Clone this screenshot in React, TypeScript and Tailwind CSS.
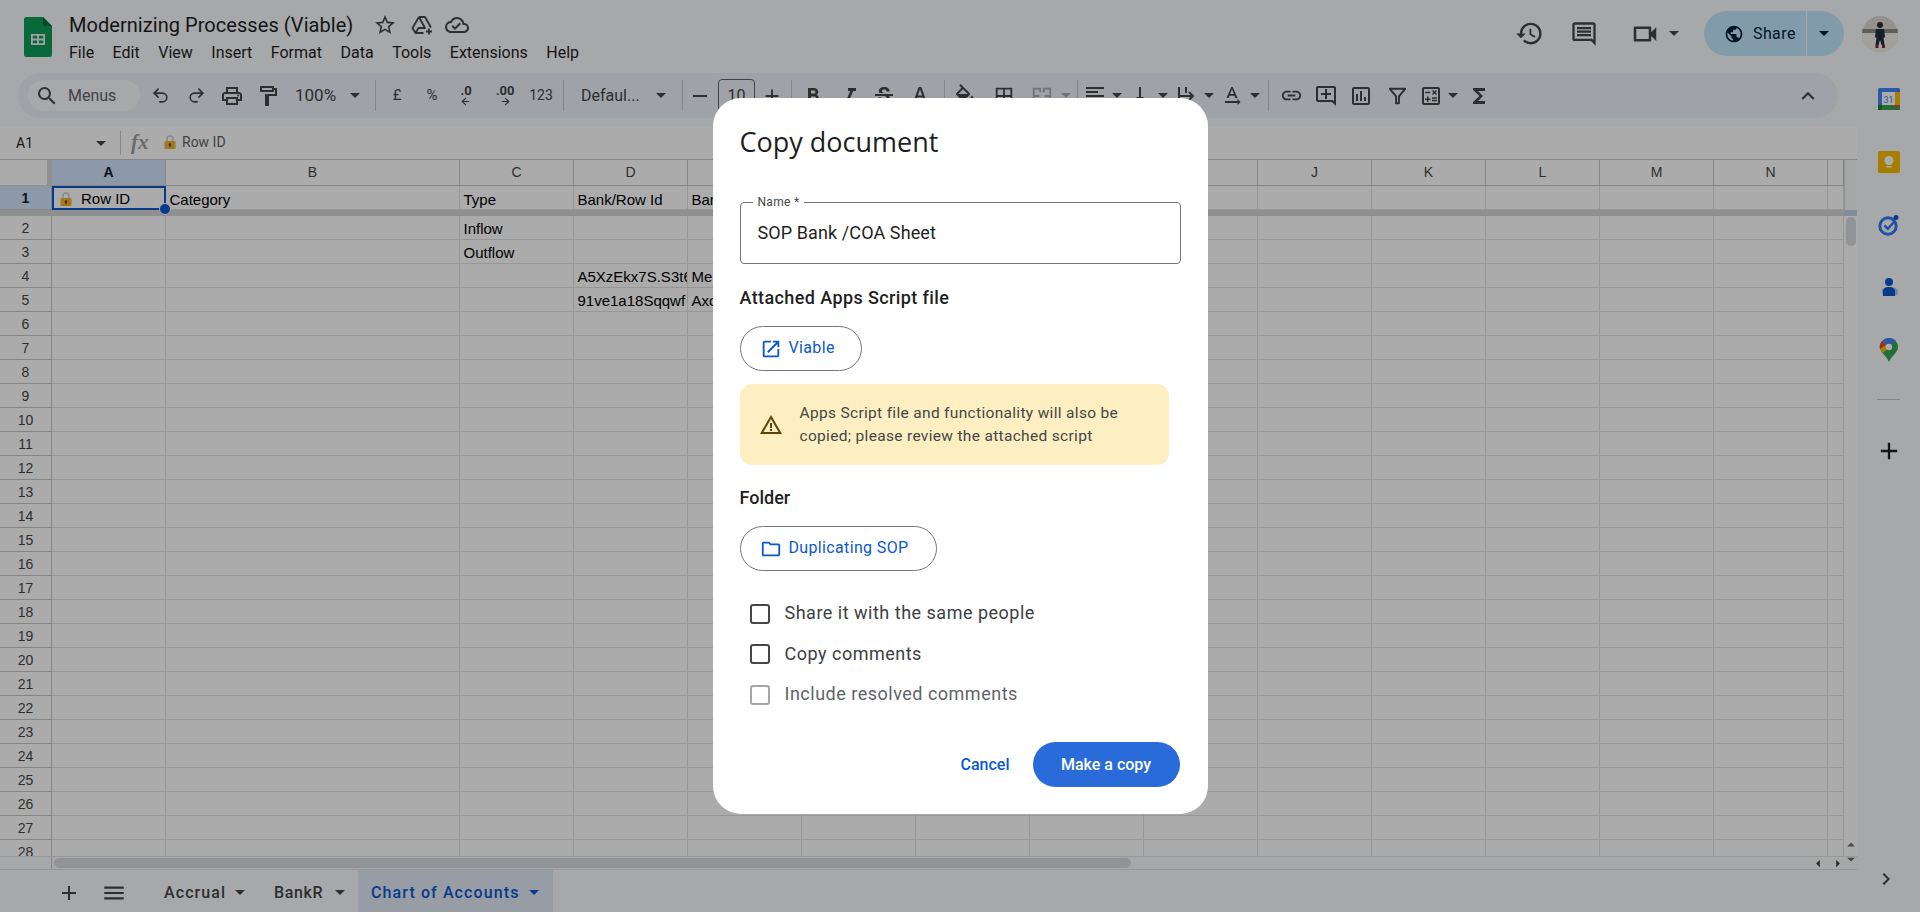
import React from 'react'
import {
  MdAdd, MdChevronRight, MdExpandLess,
  MdFormatAlignLeft, MdFormatBold, MdFormatItalic, MdFunctions, MdHistory,
  MdLink, MdMenu, MdOpenInNew, MdOutlineAddComment, MdOutlineBorderAll, MdOutlineCalculate, MdOutlineCloudDone, MdOutlineComment,
  MdOutlineFolder, MdOutlineFormatColorFill, MdOutlineFormatPaint, MdOutlineInsertChart, MdOutlinePrint, MdOutlineStarBorder, MdOutlineVideocam,
  MdPublic, MdSearch, MdStrikethroughS, MdTextRotationNone, MdFormatColorText, MdVerticalAlignBottom, MdWarningAmber,
} from 'react-icons/md'
import { ArrowLeft, ArrowRight, Redo2, Undo2 } from 'lucide-react'

const gridCols = 'grid grid-cols-[52px_114px_294px_114px_114px_114px_114px_114px_114px_114px_114px_114px_114px_114px_114px_16px] grid-rows-[24px]'
const colNames = ['A', 'B', 'C', 'D', 'E', 'F', 'G', 'H', 'I', 'J', 'K', 'L', 'M', 'N', '']

const cells: Record<number, Record<number, string>> = {
  2: { 2: 'Inflow' },
  3: { 2: 'Outflow' },
  4: { 3: 'A5XzEkx7S.S3t6', 4: 'Me' },
  5: { 3: '91ve1a18Sqqwf', 4: 'Axc' },
}

const menus = ['File', 'Edit', 'View', 'Insert', 'Format', 'Data', 'Tools', 'Extensions', 'Help']

const Lock = ({ className }: any) => (
  <svg viewBox="0 0 12 14" className={className}>
    <path d="M3 6V4a3 3 0 0 1 6 0v2" fill="none" stroke="#c9cdd2" strokeWidth="1.6" />
    <rect x="0.5" y="6" width="11" height="8" rx="1" fill="#f0b429" />
    <circle cx="6" cy="9.6" r="1.3" fill="#5b4208" />
    <rect x="5.4" y="9.8" width="1.2" height="2.4" fill="#5b4208" />
  </svg>
)

const Caret = ({ className = '' }: any) => (
  <span className={`inline-block w-0 h-0 border-x-[5px] border-x-transparent border-t-[5px] border-t-[#444746] ${className}`} />
)

const Sep = ({ className = '' }: any) => <div className={`w-px h-[31px] bg-[#c7c7c7] shrink-0 ${className}`} />

const Tb = ({ children, className = 'w-[36px]' }: any) => (
  <div className={`flex items-center justify-center shrink-0 h-full text-[#444746] ${className}`}>{children}</div>
)

const Header = () => (
  <div className="h-[73px] flex items-start shrink-0">
    <svg viewBox="0 0 28 40" className="w-[28px] h-[40px] ml-[24px] mt-[17px] shrink-0">
      <path d="M2.5 0H19l9 9v28.5a2.5 2.5 0 0 1-2.500 2.500h-23A2.500 2.500 0 0 1 0 37.500v-35A2.500 2.500 0 0 1 2.500 0z" fill="#0f9d58" />
      <path d="M19 0l9 9h-6.500A2.500 2.500 0 0 1 19 6.500z" fill="#0a6e3d" />
      <path d="M7 17h14v11H7z M8.800 18.800v2.800h4.300v-2.800z M14.900 18.800v2.800h4.300v-2.800z M8.800 23.400v2.800h4.300v-2.800z M14.900 23.400v2.800h4.300v-2.800z" fill="#f1f1f1" fillRule="evenodd" />
    </svg>
    <div className="ml-[17px] mt-[10px]">
      <div className="flex items-center h-[30px]">
        <span className="font-['Roboto',sans-serif] text-[20px] text-[#1f1f1f] tracking-[0.05px] w-[304px] whitespace-nowrap">Modernizing Processes (Viable)</span>
        <MdOutlineStarBorder className="text-[24px] text-[#444746]" />
        <svg viewBox="0 0 24 24" className="w-[24px] h-[24px] ml-[13px]" fill="none" stroke="#444746" strokeWidth="1.800" strokeLinejoin="round">
          <path d="M9 4h6l6 10.500M9 4L2.500 15l3 5h8M9 4l6 11H8.500l-3 5" />
          <path d="M19 15.500v6M16 18.500h6" />
        </svg>
        <MdOutlineCloudDone className="text-[24px] text-[#444746] ml-[11px]" />
      </div>
      <div className="flex items-center h-[24px] mt-[1px] font-['Roboto',sans-serif] text-[16px] text-[#1f1f1f] gap-[18.5px]">
        {menus.map(m => <span key={m}>{m}</span>)}
      </div>
    </div>
    <div className="ml-auto flex items-center h-[45px] mt-[11px] text-[#444746]">
      <MdHistory className="text-[29px]" />
      <MdOutlineComment className="text-[28px] ml-[26px]" />
      <MdOutlineVideocam className="text-[30px] ml-[32px]" />
      <Caret className="ml-[9px]" />
      <div className="ml-[25px] w-[140px] h-[45px] rounded-full bg-[#c2e7ff] flex items-center font-['Roboto',sans-serif] text-[#001d35]">
        <MdPublic className="text-[20px] ml-[20px]" />
        <span className="text-[16px] ml-[9px] tracking-[0.4px]">Share</span>
        <div className="w-px h-full bg-[#f9fbfd] ml-[10px]" />
        <Caret className="ml-[12px] !border-t-[#001d35]" />
      </div>
      <svg viewBox="0 0 36 36" className="w-[36px] h-[36px] rounded-full ml-[18px] mr-[22px]">
        <rect width="36" height="36" fill="#dcdad5" />
        <path d="M0 13h36v4H0z" fill="#8d8c85" />
        <rect y="17" width="36" height="19" fill="#f0efeb" />
        <circle cx="18" cy="9" r="3" fill="#2e2a28" />
        <path d="M14 13h8l1 8-1.500 1 1 7h-3l-1.500-5-1.500 5h-3l1-7-1.500-1z" fill="#1f2f3d" />
        <path d="M13.500 29h3v3h-3z M20 29h3v3h-3z" fill="#7a2c28" />
      </svg>
    </div>
  </div>
)

const Toolbar = () => (
  <div className="h-[45px] w-[1820px] ml-[18px] rounded-full bg-[#edf2fa] flex items-center font-['Roboto',sans-serif] text-[15px] text-[#444746] shrink-0">
    <div className="ml-[10px] w-[112px] h-[31px] rounded-full bg-[#f9fbfd] flex items-center shrink-0">
      <MdSearch className="text-[24px] ml-[7px]" />
      <span className="ml-[9px] text-[16px] text-[#5f6368]">Menus</span>
    </div>
    <Tb className="w-[36px] ml-[2px]"><Undo2 size={19} strokeWidth={2} /></Tb>
    <Tb><Redo2 size={19} strokeWidth={2} /></Tb>
    <Tb><MdOutlinePrint className="text-[24px]" /></Tb>
    <Tb><MdOutlineFormatPaint className="text-[24px]" /></Tb>
    <Tb className="w-[89px] justify-start pl-[9px]">
      <span className="text-[17px]">100%</span><Caret className="ml-[14px]" />
    </Tb>
    <Sep />
    <Tb className="w-[42px]"><span className="text-[15px]">£</span></Tb>
    <Tb className="w-[28px]"><span className="text-[15px]">%</span></Tb>
    <Tb className="w-[40px]">
      <span className="flex flex-col items-center text-[13px] font-bold leading-[11px]">.0<ArrowLeft size={11} strokeWidth={2.5} /></span>
    </Tb>
    <Tb className="w-[38px]">
      <span className="flex flex-col items-center text-[13px] font-bold leading-[11px]">.00<ArrowRight size={11} strokeWidth={2.5} /></span>
    </Tb>
    <Tb className="w-[34px]"><span className="text-[14px]">123</span></Tb>
    <Sep className="ml-[5px]" />
    <Tb className="w-[118px] justify-start pl-[17px]">
      <span className="text-[16px] w-[75px]">Defaul...</span><Caret />
    </Tb>
    <Sep />
    <Tb className="w-[34px]"><span className="w-[14px] h-[2px] bg-[#444746]" /></Tb>
    <Tb className="w-[37px] ml-[1px]">
      <div className="w-[37px] h-[33px] border border-[#5f6368] rounded-[4px] flex items-center justify-center text-[16px]">10</div>
    </Tb>
    <Tb className="w-[34px]"><MdAdd className="text-[22px]" /></Tb>
    <Sep className="ml-[2px]" />
    <Tb className="w-[42px]"><MdFormatBold className="text-[24px]" /></Tb>
    <Tb className="w-[32px]"><MdFormatItalic className="text-[24px]" /></Tb>
    <Tb className="w-[36px]"><MdStrikethroughS className="text-[24px]" /></Tb>
    <Tb className="w-[36px]"><MdFormatColorText className="text-[24px]" /></Tb>
    <Sep className="ml-[6px]" />
    <Tb className="w-[40px]"><MdOutlineFormatColorFill className="text-[24px]" /></Tb>
    <Tb className="w-[38px]"><MdOutlineBorderAll className="text-[22px]" /></Tb>
    <Tb className="w-[38px] opacity-40">
      <svg viewBox="0 0 24 24" className="w-[22px] h-[22px]" fill="none" stroke="#444746" strokeWidth="2">
        <path d="M10 8V4H3v16h7v-4 M14 8V4h7v16h-7v-4 M4 12h5 M20 12h-5" />
      </svg>
    </Tb>
    <Tb className="w-[10px] opacity-40"><Caret /></Tb>
    <Sep className="ml-[6px]" />
    <Tb className="w-[34px]"><MdFormatAlignLeft className="text-[24px]" /></Tb>
    <Tb className="w-[10px]"><Caret /></Tb>
    <Tb className="w-[36px]"><MdVerticalAlignBottom className="text-[24px]" /></Tb>
    <Tb className="w-[10px]"><Caret /></Tb>
    <Tb className="w-[36px]">
      <svg viewBox="0 0 24 24" className="w-[24px] h-[24px]" fill="none" stroke="#444746" strokeWidth="2">
        <path d="M5 3v18 M12 3v6 M12 15v6 M5 12h14 M15 8l4 4-4 4" />
      </svg>
    </Tb>
    <Tb className="w-[10px]"><Caret /></Tb>
    <Tb className="w-[36px]"><MdTextRotationNone className="text-[24px]" /></Tb>
    <Tb className="w-[10px]"><Caret /></Tb>
    <Sep className="ml-[8px]" />
    <Tb className="w-[44px]"><MdLink className="text-[23px]" /></Tb>
    <Tb className="w-[26px]"><MdOutlineAddComment className="text-[24px]" /></Tb>
    <Tb className="w-[44px]"><MdOutlineInsertChart className="text-[24px]" /></Tb>
    <Tb className="w-[28px]">
      <svg viewBox="0 0 24 24" className="w-[23px] h-[23px]" fill="none" stroke="#444746" strokeWidth="2" strokeLinejoin="round">
        <path d="M4 5h16l-6.500 8v7h-3v-7z" />
      </svg>
    </Tb>
    <Tb className="w-[34px] ml-[3px]"><MdOutlineCalculate className="text-[24px]" /></Tb>
    <Tb className="w-[10px]"><Caret /></Tb>
    <Tb className="w-[42px]"><MdFunctions className="text-[24px]" /></Tb>
    <Tb className="ml-auto w-[36px] mr-[12px]"><MdExpandLess className="text-[26px]" /></Tb>
  </div>
)

const FormulaBar = () => (
  <div className="h-[33px] mt-[9px] bg-white border-b border-[#c7c7c7] flex items-center font-['Roboto',sans-serif] text-[#444746] shrink-0">
    <span className="ml-[16px] w-[80px] text-[14px] text-[#1f1f1f]">A1</span>
    <Caret />
    <div className="w-px h-[24px] bg-[#c7c7c7] ml-[14px]" />
    <span className="ml-[10px] w-[33px] font-['Liberation_Serif',serif] italic font-bold text-[21px] text-[#9aa0a6]">fx</span>
    <Lock className="w-[12px] h-[14px] -mt-[2px]" />
    <span className="ml-[6px] -mt-[2px] text-[14px] text-[#5f6368]">Row ID</span>
  </div>
)

const cellBase = 'border-r border-b overflow-hidden whitespace-nowrap'

const Grid = () => {
  const rows = Array.from({ length: 27 }, (_, i) => i + 2)
  return (
    <div className="relative h-[696px] w-[1844px] overflow-hidden bg-white font-['Liberation_Sans',sans-serif] text-[15px] text-black">
      <div className={`${gridCols} !grid-rows-[26px] h-[26px] text-[14px] text-[#444746]`}>
        <div className="border-b border-r-[5px] border-[#d6d6d6]" />
        {colNames.map((c, i) => (
          <div key={i} className={`${cellBase} border-[#c7c7c7] flex items-center justify-center ${i === 0 ? 'bg-[#d3e3fd] font-bold text-[#0b1a33]' : ''}`}>{c}</div>
        ))}
      </div>
      <div className={`${gridCols} h-[24px] leading-[27px]`}>
        <div className={`${cellBase} border-[#c7c7c7] bg-[#d3e3fd] font-bold text-[14px] leading-[24px] text-[#0b1a33] text-center`}>1</div>
        <div className="relative border-2 border-[#0b57d0] flex items-center pl-[6px] pt-[2px] leading-[18px]">
          <Lock className="w-[12px] h-[14px] shrink-0" />
          <span className="ml-[9px]">Row ID</span>
          <span className="absolute -right-[7px] -bottom-[7px] w-[12px] h-[12px] rounded-full bg-[#0b57d0] border border-white" />
        </div>
        {['Category', 'Type', 'Bank/Row Id', 'Ban'].map(t => <div key={t} className={`${cellBase} border-[#e1e1e1] px-[3.500px]`}>{t}</div>)}
        {colNames.slice(5).map((_, i) => <div key={i} className={`${cellBase} border-[#e1e1e1]`} />)}
      </div>
      <div className="h-[6px] bg-[#d6d6d6]" />
      {rows.map(r => (
        <div key={r} className={`${gridCols} h-[24px] leading-[25px]`}>
          <div className={`${cellBase} border-[#c7c7c7] text-[14px] leading-[24px] text-[#444746] text-center`}>{r}</div>
          {colNames.map((_, i) => (
            <div key={i} className={`${cellBase} border-[#e1e1e1] px-[3.500px]`}>{cells[r]?.[i] ?? ''}</div>
          ))}
        </div>
      ))}
    </div>
  )
}

const VScroll = () => (
  <div className="w-[13px] h-[696px] bg-white flex flex-col items-center relative">
    <div className="h-[50px] w-full bg-[#f8f9fa] border-l border-[#d6d6d6]" />
    <div className="h-[6px] w-full bg-[#c2d0ec]" />
    <div className="w-[10px] h-[29px] rounded-full bg-[#dadce0] mt-[1px]" />
    <div className="absolute -bottom-[6px] z-10 flex flex-col gap-[10px]">
      <Caret className="rotate-180 scale-75" />
      <Caret className="scale-75" />
    </div>
  </div>
)

const HScroll = () => (
  <div className="h-[14px] w-[1857px] bg-[#f9fbfd] border-y border-[#e1e1e1] flex items-center relative">
    <div className="w-[52px] h-full border-r border-[#c7c7c7]" />
    <div className="ml-[2px] w-[1077px] h-[10px] rounded-full bg-[#dadce0]" />
    <Caret className="absolute left-[1813px] rotate-90 scale-75" />
    <Caret className="absolute left-[1833px] -rotate-90 scale-75" />
  </div>
)

const Tabs = () => (
  <div className="h-[42px] pt-[3px] bg-[#f9fbfd] flex items-center font-['Roboto',sans-serif] text-[16px] tracking-[1.1px] font-medium text-[#444746]">
    <MdAdd className="text-[24px] ml-[57px] text-[#444746]" />
    <MdMenu className="text-[26px] ml-[20px] text-[#444746]" />
    <span className="ml-[37px] w-[70px] whitespace-nowrap">Accrual</span>
    <Caret className="ml-[1px]" />
    <span className="ml-[29px] w-[58px] tracking-[0.6px]">BankR</span>
    <Caret className="ml-[3px]" />
    <div className="ml-[13px] -mt-[3px] h-[42px] pt-[3px] w-[195px] bg-[#e1e9f7] flex items-center pl-[13px] text-[#0b57d0]">
      <span className="w-[158px] whitespace-nowrap">Chart of Accounts</span>
      <Caret className="!border-t-[#0b57d0]" />
    </div>
  </div>
)

const SideBar = () => (
  <div className="w-[63px] flex flex-col items-center relative">
    <svg viewBox="0 0 22 22" className="w-[22px] h-[22px] mt-[15px]">
      <rect width="22" height="22" rx="1.500" fill="#4285f4" />
      <rect x="4" y="4" width="14" height="14" fill="#fff" />
      <rect x="17" y="4" width="5" height="14" fill="#fbbc04" />
      <rect x="4" y="17" width="18" height="5" fill="#34a853" />
      <rect y="17" x="0" width="4" height="5" fill="#188038" />
      <path d="M17 22l5-5h-5z" fill="#ea4335" />
      <text x="10.500" y="14.500" textAnchor="middle" fontSize="9" fontFamily="Roboto, sans-serif" fill="#4285f4">31</text>
    </svg>
    <svg viewBox="0 0 22 22" className="w-[22px] h-[22px] mt-[41px]">
      <rect width="22" height="22" rx="1.500" fill="#fbbc04" />
      <circle cx="11" cy="9.500" r="4.500" fill="#fff" />
      <rect x="9" y="11" width="4" height="3" fill="#fff" />
      <rect x="8.500" y="15" width="5" height="1.500" fill="#fff" />
    </svg>
    <svg viewBox="0 0 22 22" className="w-[22px] h-[22px] mt-[41px]">
      <circle cx="10" cy="12" r="8.200" fill="none" stroke="#2f7cf6" strokeWidth="3" />
      <path d="M6.500 11.500l3.300 3.300L17 7" fill="none" stroke="#2f7cf6" strokeWidth="2.500" />
      <circle cx="18" cy="3.500" r="2.500" fill="#0b57d0" />
    </svg>
    <svg viewBox="0 0 22 22" className="w-[22px] h-[22px] mt-[41px]">
      <circle cx="11" cy="5" r="4" fill="#0b57d0" />
      <path d="M4 13.500c0-2 3-3.500 8-3.500 3 0 8 1 8 5 0 2-1 3.500-3 3.500H6c-2 0-2-3-2-5z" fill="#a8c7fa" />
      <path d="M5 14c0-2.500 3-4 6-4s6 1.500 6 4v5H5z" fill="#0b57d0" />
    </svg>
    <svg viewBox="0 0 22 26" className="w-[22px] h-[26px] mt-[38px]">
      <path d="M11 1a9 9 0 0 1 9 9c0 6-7 9-9 15-2-6-9-9-9-15a9 9 0 0 1 9-9z" fill="#34a853" />
      <path d="M4 4a9 9 0 0 1 7-3c3 0 5 1 7 3L11 10z" fill="#4285f4" />
      <path d="M2 10a9 9 0 0 1 2-6l7 6-6 6c-2-2-3-4-3-6z" fill="#fbbc04" />
      <path d="M4 4l4 4-6 4c-1-3 0-6 2-8z" fill="#ea4335" />
      <circle cx="11" cy="10" r="3.200" fill="#fff" />
    </svg>
    <div className="w-[23px] h-px bg-[#c7c7c7] mt-[36px]" />
    <MdAdd className="text-[28px] text-[#1f1f1f] mt-[37px]" />
    <MdChevronRight className="absolute top-[794px] left-[17px] text-[24px] text-[#444746]" />
  </div>
)

const Check = ({ label, off }: any) => (
  <div className={`flex items-center ml-[10px] h-[21px] text-[18px] tracking-[0.5px] ${off ? 'text-[#5f6368]' : 'text-[#3c4043]'}`}>
    <div className={`w-[20px] h-[20px] rounded-[3px] border-2 shrink-0 ${off ? 'border-[#a6a6a6]' : 'border-[#444746]'}`} />
    <span className="ml-[15px] -mt-[2px]">{label}</span>
  </div>
)

const Pill = ({ icon, label, className }: any) => (
  <div className={`h-[45px] rounded-full border border-[#747775] flex items-center pl-[19px] text-[#0b57d0] text-[16px] tracking-[0.35px] ${className}`}>
    {icon}
    <span className="ml-[7px] -mt-[1px]">{label}</span>
  </div>
)

const CopyDialog = () => (
  <div className="w-[495px] h-[716px] bg-white rounded-[28px] px-[27px] pt-[27px] font-['Roboto',sans-serif]">
    <h2 className="font-['Open_Sans',sans-serif] text-[27px] leading-[34px] text-[#1f1f1f]">Copy document</h2>
    <div className="relative mt-[43px] w-[441px] h-[62px] border border-[#747775] rounded-[4px] flex items-center pl-[17px] pb-[2px] text-[18px] tracking-[0.1px] text-[#1f1f1f]">
      <span className="absolute -top-[9px] left-[12px] px-[5px] bg-white text-[12px] leading-[16px] tracking-[0.3px] text-[#444746]">Name *</span>
      SOP Bank /COA Sheet
    </div>
    <div className="mt-[22px] text-[18px] leading-[24px] font-medium tracking-[0.4px] text-[#1f1f1f]">Attached Apps Script file</div>
    <Pill className="mt-[16px] w-[122px]" icon={<MdOpenInNew className="text-[22px]" />} label="Viable" />
    <div className="mt-[13px] w-[429px] h-[81px] rounded-[12px] bg-[#feefc3] flex items-center pl-[19px] text-[15.500px] leading-[23px] tracking-[0.32px] text-[#444746]">
      <MdWarningAmber className="text-[24px] text-[#5c4508] shrink-0" />
      <div className="ml-[17px]">Apps Script file and functionality will also be<br />copied; please review the attached script</div>
    </div>
    <div className="mt-[21px] text-[18px] leading-[24px] font-medium text-[#1f1f1f]">Folder</div>
    <Pill className="mt-[16px] w-[197px]" icon={<MdOutlineFolder className="text-[22px]" />} label="Duplicating SOP" />
    <div className="mt-[32px] flex flex-col gap-[19.500px]">
      <Check label="Share it with the same people" />
      <Check label="Copy comments" />
      <Check label="Include resolved comments" off />
    </div>
    <div className="mt-[37px] flex items-center justify-end text-[16px] font-medium w-[440px]">
      <span className="text-[#0b57d0] mr-[23px]">Cancel</span>
      <div className="w-[147px] h-[45px] rounded-full bg-[#296cd9] text-white flex items-center justify-center">Make a copy</div>
    </div>
  </div>
)

export default function App() {
  return (
    <div className="relative w-[1920px] h-[912px] overflow-hidden bg-[#f9fbfd]">
      <Header />
      <div className="flex">
        <div className="w-[1857px] flex flex-col">
          <Toolbar />
          <FormulaBar />
          <div className="flex">
            <Grid />
            <VScroll />
          </div>
          <HScroll />
          <Tabs />
        </div>
        <SideBar />
      </div>
      <div className="absolute inset-0 bg-black/33 flex items-center justify-center">
        <CopyDialog />
      </div>
    </div>
  )
}
